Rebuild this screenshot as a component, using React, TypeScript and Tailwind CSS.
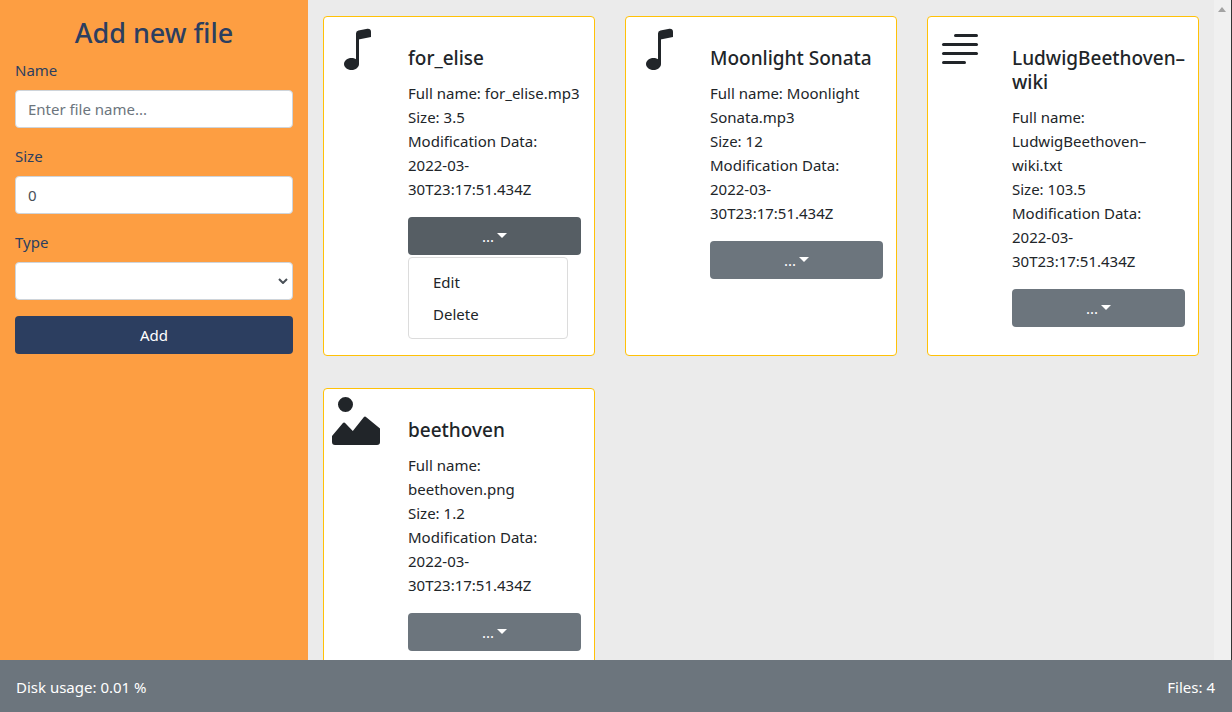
const files = [
  { name: 'for_elise', fullName: 'for_elise.mp3', size: '3.5', type: 'audio', open: true },
  { name: 'Moonlight Sonata', fullName: 'Moonlight Sonata.mp3', size: '12', type: 'audio', open: false },
  { name: 'LudwigBeethoven–wiki', fullName: 'LudwigBeethoven–wiki.txt', size: '103.5', type: 'text', open: false },
  { name: 'beethoven', fullName: 'beethoven.png', size: '1.2', type: 'image', open: false },
];

function FileIcon({ type }: { type: string }) {
  return (
    <svg viewBox="0 0 16 16" fill="#212529" className="w-12 h-12 shrink-0 ml-2 mt-2">
      {type === 'audio' && (
        <>
          <path d="M9 13c0 1.105-1.12 2-2.5 2S4 14.105 4 13s1.12-2 2.5-2 2.5.895 2.5 2z" />
          <path fillRule="evenodd" d="M9 3v10H8V3h1z" />
          <path d="M8 2.82a1 1 0 0 1 .804-.98l3-.6A1 1 0 0 1 13 2.22V4L8 5V2.82z" />
        </>
      )}
      {type === 'text' && (
        <>
          <rect x="6" y="3" width="8" height="1" rx=".5" />
          <rect x="2" y="6" width="12" height="1" rx=".5" />
          <rect x="2" y="9" width="12" height="1" rx=".5" />
          <rect x="2" y="12" width="8" height="1" rx=".5" />
        </>
      )}
      {type === 'image' && (
        <path d="M7 2.5a2.5 2.5 0 1 1-5 0 2.5 2.5 0 0 1 5 0zm4.225 4.053a.5.5 0 0 0-.577.093l-3.71 4.71-2.66-2.772a.5.5 0 0 0-.63.062L.002 13v2a1 1 0 0 0 1 1h14a1 1 0 0 0 1-1v-4.5l-4.777-3.947z" />
      )}
    </svg>
  );
}

function FileCard({ file }: { file: (typeof files)[number] }) {
  return (
    <div className="flex h-[340px] bg-white border border-[#ffc107] rounded-[4px]">
      <FileIcon type={file.type} />
      <div className="w-[173px] ml-7 pt-[29px] text-[#212529]">
        <h5 className="text-[19px] leading-6 font-medium mb-[11px]">{file.name}</h5>
        <p>Full name: {file.fullName}</p>
        <p>Size: {file.size}</p>
        <p>
          Modification Data:
          <br />
          2022-03-30T23:17:51.434Z
        </p>
        <div className="relative mt-4">
          <button
            className={`flex items-center justify-center w-full h-[38px] rounded-[4px] text-white ${
              file.open ? 'bg-[#565e64]' : 'bg-[#6c757d]'
            }`}
          >
            <span>...</span>
            <span className="ml-[3px] mb-[1px] w-0 h-0 border-t-[5px] border-x-[5px] border-x-transparent border-t-white" />
          </button>
          {file.open && (
            <div className="absolute top-full left-0 mt-[2px] w-40 py-2 bg-white border border-[#dcdcdc] rounded-[4px]">
              <div className="h-8 px-6 leading-8">Edit</div>
              <div className="h-8 px-6 leading-8">Delete</div>
            </div>
          )}
        </div>
      </div>
    </div>
  );
}

export default function App() {
  return (
    <div className="flex flex-col h-screen overflow-hidden text-[15px] leading-6 font-['Noto_Sans',sans-serif]">
      <div className="flex flex-1 min-h-0">
        <aside className="w-[308px] shrink-0 px-[15px] bg-[#fd9e42] text-[#2c3e60]">
          <h2 className="pt-4 mb-2 text-center text-[27px] leading-[34px] font-medium">Add new file</h2>
          <label className="block mb-2">Name</label>
          <input
            type="text"
            placeholder="Enter file name..."
            className="block w-full h-[38px] mb-4 px-3 bg-white border border-[#ced4da] rounded-[4px] text-[#212529] placeholder:text-[#6c757d]"
          />
          <label className="block mb-2">Size</label>
          <input
            type="text"
            defaultValue="0"
            className="block w-full h-[38px] mb-4 px-3 bg-white border border-[#ced4da] rounded-[4px] text-[#495057]"
          />
          <label className="block mb-2">Type</label>
          <div className="relative mb-4">
            <select className="block w-full h-[38px] px-3 bg-white border border-[#ced4da] rounded-[4px] appearance-none">
              <option></option>
            </select>
            <svg viewBox="0 0 10 6" className="absolute right-[5px] top-4 w-[10px] h-[6px] fill-none stroke-[#495057] stroke-2">
              <path d="M1 1l4 4 4-4" />
            </svg>
          </div>
          <button className="w-full h-[38px] bg-[#2c3e60] rounded-[4px] text-white">Add</button>
        </aside>
        <main className="flex-1 min-w-0 overflow-hidden bg-[#ebebeb] pt-4 pl-[15px]">
          <div className="grid grid-cols-[272px_272px_272px] gap-x-[30px] gap-y-8">
            {files.map((file) => (
              <FileCard key={file.name} file={file} />
            ))}
          </div>
        </main>
        <div className="w-[18px] shrink-0 flex justify-center pt-[7px] pr-[1px] bg-[#f0f0f0] border-r border-[#333333]">
          <span className="w-0 h-0 border-b-[5px] border-x-[4px] border-x-transparent border-b-[#a3a3a3]" />
        </div>
      </div>
      <footer className="flex items-center justify-between h-[52px] shrink-0 pt-[2px] pl-4 pr-[17px] bg-[#6c757d] text-white">
        <span>Disk usage: 0.01 %</span>
        <span>Files: 4</span>
      </footer>
    </div>
  );
}
